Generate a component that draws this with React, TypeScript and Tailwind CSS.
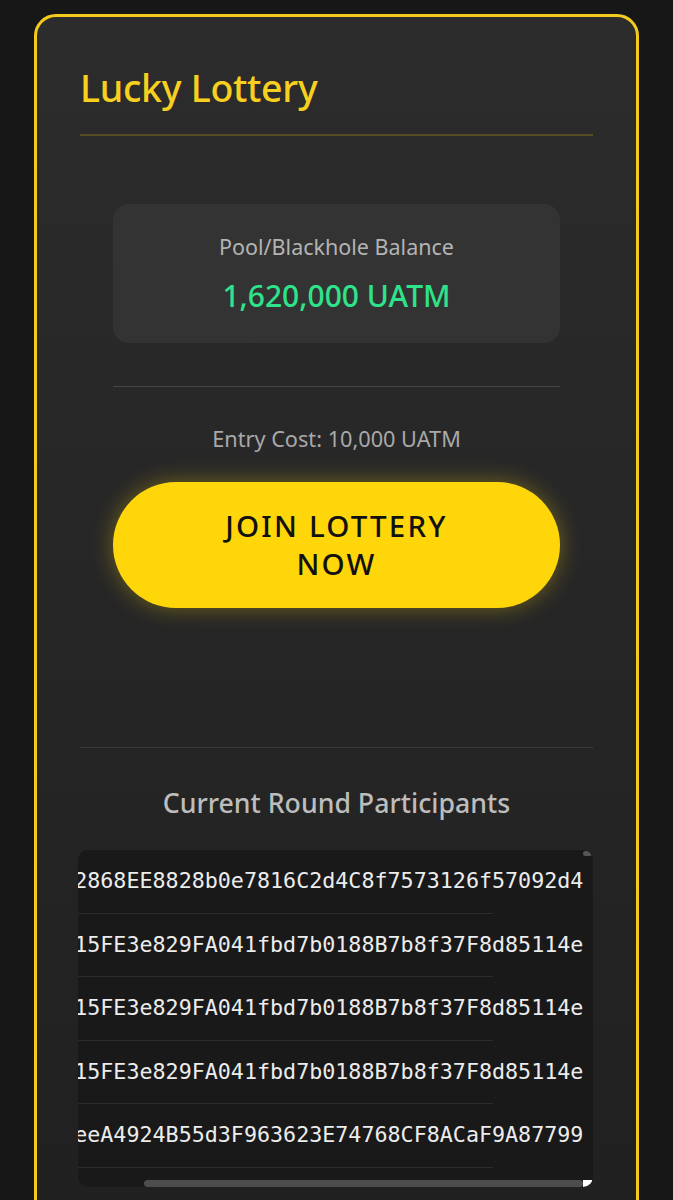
import React, { useLayoutEffect, useRef } from "react";

const base = [
  "0xb2868EE8828b0e7816C2d4C8f7573126f57092d4",
  "0x715FE3e829FA041fbd7b0188B7b8f37F8d85114e",
  "0x715FE3e829FA041fbd7b0188B7b8f37F8d85114e",
  "0x715FE3e829FA041fbd7b0188B7b8f37F8d85114e",
  "0x3eeA4924B55d3F963623E74768CF8ACaF9A87799",
  "0x9a41c0D2e7B8F35a66E01d9C4b2F7e8A31c5D0f2",
];

const rows: string[] = [];
for (let i = 0; i < 60; i++) rows.push(base[i % base.length]);

export default function App() {
  const listRef = useRef<HTMLDivElement>(null);
  useLayoutEffect(() => {
    const el = listRef.current;
    if (el) {
      el.scrollLeft = el.scrollWidth;
      el.scrollTop = 0;
    }
  }, []);

  const sans = { fontFamily: '"Noto Sans", "Open Sans", sans-serif' };

  return (
    <div className="min-h-screen bg-[#171717] px-[34px] pt-[14px] pb-10" style={sans}>
      <div className="rounded-[22px] border-[3px] border-[#f4cb1c] bg-gradient-to-b from-[#2c2c2c] to-[#202020] px-[43px] pt-[47px] pb-12">
        <h1 className="text-[37.5px] leading-[48px] font-medium text-[#f7cf1f] tracking-[-0.3px]">
          Lucky Lottery
        </h1>
        <div className="mt-[22px] h-[2px] bg-[#574c23]" />

        <div className="mx-[33px] mt-[68px] flex h-[139px] flex-col items-center rounded-[16px] bg-[#333333] pt-[29px]">
          <div className="text-[21.5px] leading-[28px] text-[#b3b3b3]">Pool/Blackhole Balance</div>
          <div className="mt-[15px] text-[30px] leading-[40px] font-medium text-[#2ee48b]">
            1,620,000 UATM
          </div>
        </div>

        <div className="mx-[33px] mt-[43px] h-px bg-[#464646]" />

        <div className="mt-[38px] text-center text-[21.7px] leading-[28px] text-[#a9a9a9]">
          Entry Cost: 10,000 UATM
        </div>

        <button className="mx-[33px] mt-[29px] flex h-[126px] w-[447px] items-center justify-center rounded-full bg-[#ffd60a] shadow-[0_0_22px_rgba(255,214,10,0.35)]">
          <span className="text-center text-[29.5px] leading-[38px] font-medium tracking-[2.2px] text-[#111111]">
            JOIN LOTTERY
            <br />
            NOW
          </span>
        </button>

        <div className="mt-[139px] h-px bg-[#3a3a3a]" />

        <h2 className="mt-[37px] text-center text-[26.7px] leading-[36px] font-medium text-[#bdbdbd]">
          Current Round Participants
        </h2>

        <div className="relative mt-[29px] -ml-[2px] h-[337px] w-[515px] overflow-hidden rounded-[10px] bg-[#191919]">
          <div
            ref={listRef}
            className="h-[330px] w-[505px] overflow-auto [scrollbar-width:none]"
          >
            {rows.map((a, i) => (
              <div
                key={i}
                className="mr-[15px] whitespace-nowrap border-b border-[#2b2b2b] py-5 pl-[32px] text-[21.7px] leading-[22.5px] text-[#ececec]"
                style={{ fontFamily: '"DejaVu Sans Mono", "Liberation Mono", monospace' }}
              >
                {a}
              </div>
            ))}
          </div>
          <div className="absolute right-[1px] top-[1px] h-[5px] w-[9px] rounded-full bg-[#555555]" />
          <div className="absolute bottom-0 left-[66px] h-[7px] w-[439px] rounded-full bg-[#4d4d4d]" />
          <div className="absolute bottom-0 right-[1px] h-[7px] w-[9px] bg-white" />
        </div>
      </div>
    </div>
  );
}
